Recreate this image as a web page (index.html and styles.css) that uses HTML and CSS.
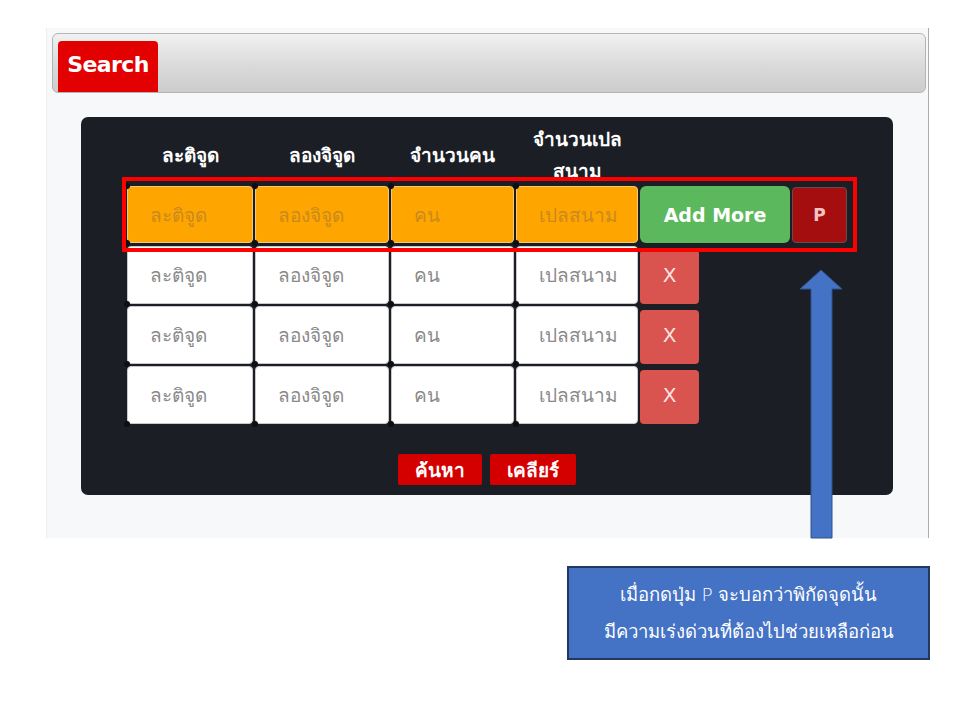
FILE: index.html
```html
<!DOCTYPE html>
<html lang="th">
<head>
<meta charset="utf-8">
<title>Search</title>
<link rel="stylesheet" href="styles.css">
</head>
<body>
<div class="page">
  <div class="shot">
    <div class="tabbar"><div class="tab">Search</div></div>
    <div class="board">
      <div class="row head">
        <div class="th">ละติจูด</div>
        <div class="th">ลองจิจูด</div>
        <div class="th">จำนวนคน</div>
        <div class="th">จำนวนเปล<br>สนาม</div>
      </div>
      <div class="row first">
        <div class="cell orange"><span class="txt">ละติจูด</span></div>
        <div class="cell orange"><span class="txt">ลองจิจูด</span></div>
        <div class="cell orange"><span class="txt">คน</span></div>
        <div class="cell orange"><span class="txt">เปลสนาม</span></div>
        <div class="btn-add">Add More</div>
        <div class="btn-p">P</div>
      </div>
      <div class="row">
        <div class="cell"><span class="txt">ละติจูด</span></div>
        <div class="cell"><span class="txt">ลองจิจูด</span></div>
        <div class="cell"><span class="txt">คน</span></div>
        <div class="cell"><span class="txt">เปลสนาม</span></div>
        <div class="btn-x">X</div>
      </div>
      <div class="row">
        <div class="cell"><span class="txt">ละติจูด</span></div>
        <div class="cell"><span class="txt">ลองจิจูด</span></div>
        <div class="cell"><span class="txt">คน</span></div>
        <div class="cell"><span class="txt">เปลสนาม</span></div>
        <div class="btn-x">X</div>
      </div>
      <div class="row">
        <div class="cell"><span class="txt">ละติจูด</span></div>
        <div class="cell"><span class="txt">ลองจิจูด</span></div>
        <div class="cell"><span class="txt">คน</span></div>
        <div class="cell"><span class="txt">เปลสนาม</span></div>
        <div class="btn-x">X</div>
      </div>
      <div class="actions">
        <span class="btn-red">ค้นหา</span>
        <span class="btn-red">เคลียร์</span>
      </div>
    </div>
    <div class="highlight"></div>
    <svg class="arrow" width="46" height="272" viewBox="0 0 46 272">
      <polygon points="23,2 2,21 13,21 13,270 34,270 34,21 44,21" fill="#4472c4" stroke="#2f528f" stroke-width="1"/>
    </svg>
  </div>
  <div class="note">เมื่อกดปุ่ม P จะบอกว่าพิกัดจุดนั้น<br>มีความเร่งด่วนที่ต้องไปช่วยเหลือก่อน</div>
</div>
</body>
</html>
```

FILE: styles.css
```css
* { box-sizing: border-box; }
html, body { margin: 0; padding: 0; background: #ffffff; }
body { font-family: "DejaVu Sans", "Noto Sans", sans-serif; }

.page {
  width: 884px;
  margin: 28px 0 0 46px;
}

.shot {
  position: relative;
  width: 883px;
  height: 510px;
  background: #f7f8fa;
  border-left: 1px solid #eceef1;
  border-right: 1px solid #a9abae;
  padding: 5px 2px 0 5px;
}

.tabbar {
  height: 60px;
  border: 1px solid #b4b4b4;
  border-radius: 6px;
  background: linear-gradient(#f1f1f1, #d8d8d8 60%, #cdcdcd);
  padding: 7px 0 0 5px;
}

.tab {
  width: 100px;
  height: 51px;
  background: #e30000;
  border-radius: 4px 4px 0 0;
  color: #fff;
  font-weight: bold;
  font-size: 22px;
  letter-spacing: -0.6px;
  display: flex;
  align-items: center;
  justify-content: center;
  padding-bottom: 4px;
}

.board {
  width: 812px;
  margin: 24px 0 0 29px;
  background: #1b1f25;
  border-radius: 7px;
  padding: 0 0 10px 46px;
}

.row {
  display: grid;
  grid-template-columns: 126px 134px 123px 122px 150px 55px;
  column-gap: 2px;
  height: 57px;
  margin-bottom: 3px;
}
.row.head {
  height: 69px;
  margin-bottom: 0;
  padding-top: 6px;
  align-items: center;
}

.th {
  color: #ffffff;
  font-weight: bold;
  font-size: 19px;
  line-height: 32px;
  text-align: center;
  height: 64px;
  display: flex;
  align-items: center;
  justify-content: center;
  overflow: hidden;
}

.cell {
  position: relative;
  background: #ffffff;
  border: 1px solid #c9c9c9;
  border-radius: 4px;
  color: #8a8a8a;
  font-size: 19px;
  padding-left: 22px;
  display: flex;
  align-items: center;
  white-space: nowrap;
}
.cell .txt {
  display: block;
  max-width: 100%;
  padding: 4px 0;
}
.cell::after {
  content: "";
  position: absolute;
  left: -4px;
  bottom: -4px;
  width: 6px;
  height: 6px;
  border-radius: 50%;
  background: #0d0f12;
}
.row.first .cell::before {
  content: "";
  position: absolute;
  left: -4px;
  top: -4px;
  width: 6px;
  height: 6px;
  border-radius: 50%;
  background: #0d0f12;
}
.cell.orange {
  background: #ffa500;
  border-color: #f7c874;
  color: #c98a1e;
}

.btn-add {
  background: #5cb85c;
  border-radius: 6px;
  color: #ffffff;
  font-weight: bold;
  font-size: 19px;
  display: flex;
  align-items: center;
  justify-content: center;
}

.btn-p {
  background: #a50e0e;
  border: 1px solid #6b4a4a;
  border-radius: 4px;
  color: #f3c3c3;
  font-size: 17px;
  font-weight: 600;
  display: flex;
  align-items: center;
  justify-content: center;
  margin-top: 1px;
}

.btn-x {
  width: 59px;
  height: 54px;
  margin-top: 4px;
  background: #d9534f;
  border-radius: 4px;
  color: #fbe3e2;
  font-size: 20px;
  display: flex;
  align-items: center;
  justify-content: center;
  padding-bottom: 4px;
}

.actions {
  display: flex;
  justify-content: center;
  gap: 8px;
  margin: 31px 0 0 -46px;
}
.btn-red {
  height: 31px;
  padding: 0 17px;
  background: #d40000;
  color: #ffffff;
  font-weight: bold;
  font-size: 19px;
  display: flex;
  align-items: center;
  border-radius: 2px;
}

.highlight {
  position: absolute;
  left: 75px;
  top: 149px;
  width: 735px;
  height: 75px;
  border: 4px solid #ff0000;
}

.arrow {
  position: absolute;
  left: 751px;
  top: 240px;
  overflow: visible;
}

.note {
  width: 363px;
  height: 94px;
  margin: 28px 0 0 auto;
  background: #4472c4;
  border: 2px solid #22385f;
  color: #ffffff;
  font-size: 18.5px;
  font-weight: 300;
  line-height: 37px;
  text-align: center;
  padding-top: 8px;
}
```
